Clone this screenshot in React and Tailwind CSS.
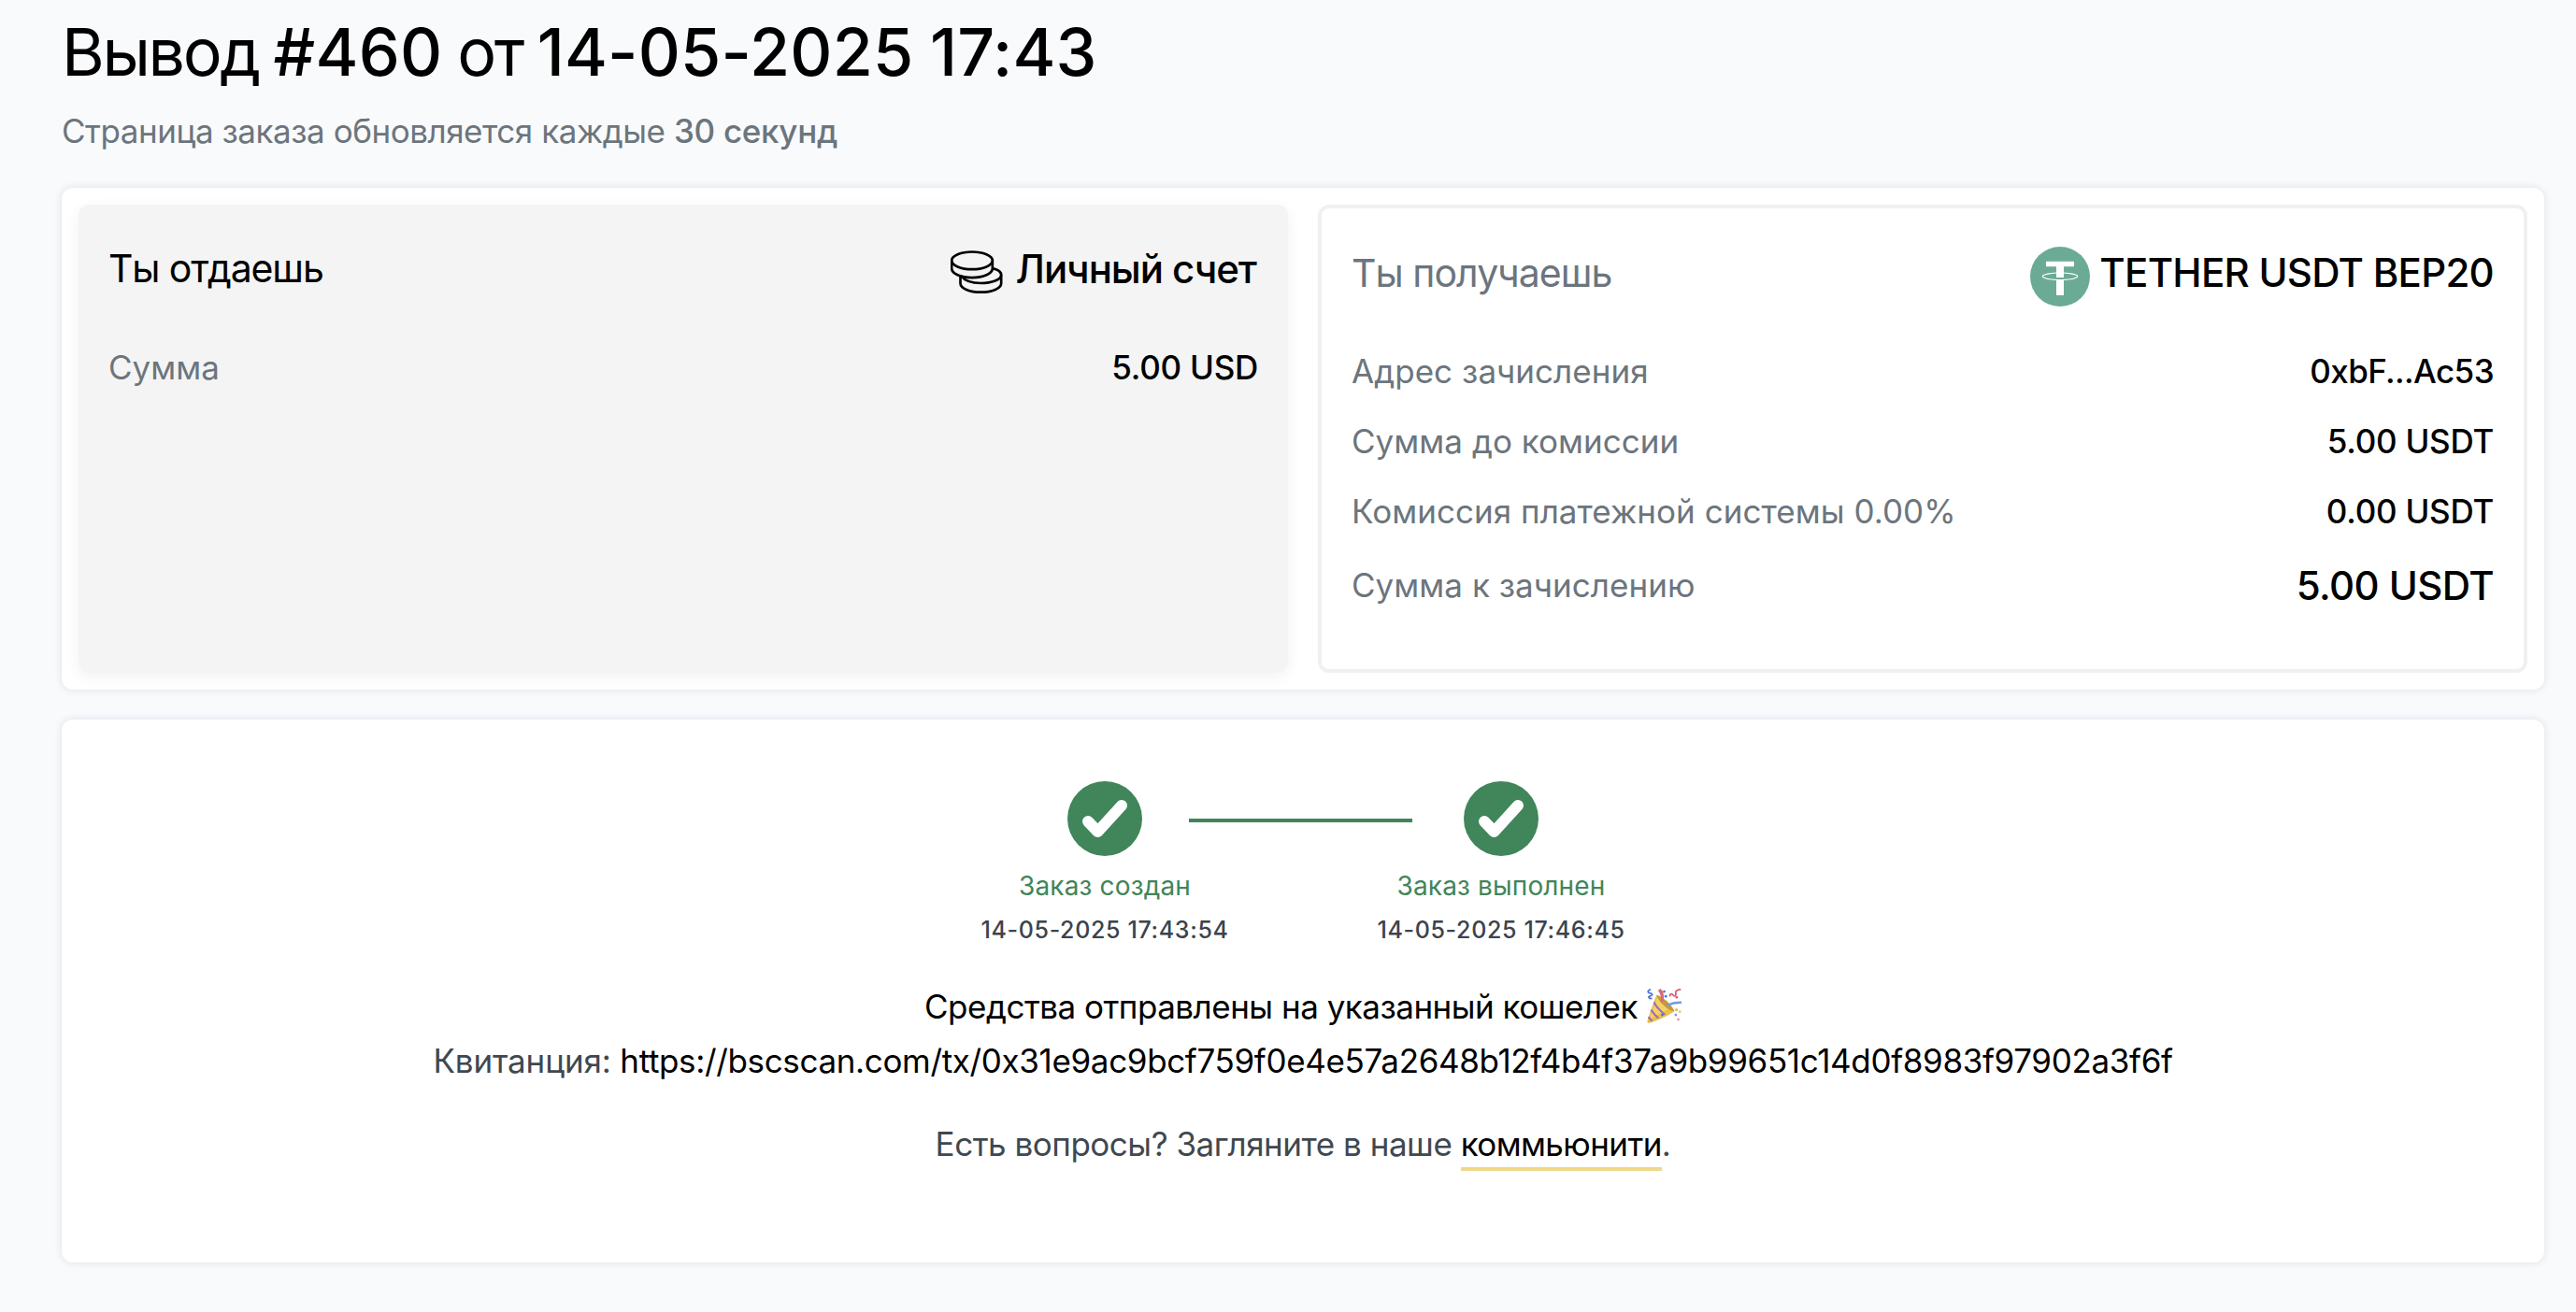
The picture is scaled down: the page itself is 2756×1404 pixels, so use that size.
const DETAILS = [
  { label: 'Адрес зачисления', value: '0xbF...Ac53', tight: true },
  { label: 'Сумма до комиссии', value: '5.00 USDT' },
  { label: 'Комиссия платежной системы 0.00%', value: '0.00 USDT' },
  { label: 'Сумма к зачислению', value: '5.00 USDT', total: true },
];

const TX_URL =
  'https://bscscan.com/tx/0x31e9ac9bcf759f0e4e57a2648b12f4b4f37a9b99651c14d0f8983f97902a3f6f';

function CoinsIcon() {
  return (
    <svg
      className="w-[56px] h-[46px] mt-[7px]"
      viewBox="36 38 168 138"
      fill="none"
      stroke="#000"
      strokeWidth="8"
    >
      <ellipse cx="105" cy="70.5" rx="65.5" ry="28" />
      <path d="M39.5 70v26c0 16 29 29.500 65.500 29.500s65.500-13.500 65.500-29.500V70" />
      <path d="M67.500 117v27c0 15.500 29 28 65.500 28s65.500-12.500 65.500-28v-27c0-9-9-17-25-21" />
      <path d="M70 120c10 14 34 23 63 23 36 0 65.500-11 65.500-26" />
    </svg>
  );
}

function TetherIcon() {
  return (
    <svg className="w-[64px] h-[64px] mt-[10px]" viewBox="24 24 192 192">
      <circle cx="120" cy="120" r="96" fill="#6bab95" />
      <path d="M75 71h90v17h-33v35h-24V88H75zM108 129h24v51h-24z" fill="#fff" />
      <ellipse cx="120" cy="119.500" rx="56" ry="11.500" fill="none" stroke="#fff" strokeWidth="3.500" />
    </svg>
  );
}

function CheckIcon() {
  return (
    <svg className="w-[80px] h-[80px] shrink-0" viewBox="0 0 80 80">
      <circle cx="40" cy="40" r="40" fill="#41855a" />
      <path
        d="M22 43l10.500 11L58 26"
        fill="none"
        stroke="#fff"
        strokeWidth="12"
        strokeLinecap="round"
        strokeLinejoin="round"
      />
    </svg>
  );
}

function PartyIcon() {
  return (
    <svg className="inline-block w-[37px] h-[37px] ml-[10px] align-[-5px]" viewBox="0 0 108 108" fill="none">
      <path d="M30 20C20 45 8 78 1 102c0 4 3 6 7 5 26-7 54-20 78-36C76 50 54 28 30 20z" fill="#e9c04d" />
      <path d="M34 24C26 46 14 74 5 98c20-14 44-24 62-34-6-14-18-30-33-40z" fill="#f6d873" opacity=".7" />
      <path d="M22 42c6 14 18 26 34 39M13 66c6 10 13 18 23 26M5 88c3 5 6 9 11 13" stroke="#9a68c0" strokeWidth="6" />
      <path d="M30 20c20 6 47 30 56 51-20-2-50-30-56-51z" fill="#c9973a" />
      <path d="M46 42c2-12 0-27-9-38M48 38C52 22 48 8 40 2" stroke="#d9687a" strokeWidth="6" />
      <path d="M62 52c14-6 28-10 46-9" stroke="#6d9be0" strokeWidth="7" />
      <path d="M12 2c-10 4-12 10-2 12s8 7 0 9-5 8 6 8" stroke="#4a74d8" strokeWidth="5" />
      <path d="M72 24c-2-8 6-10 10-4s10 2 8-6 6-10 16-12" stroke="#dc5470" strokeWidth="5" />
      <circle cx="54" cy="9" r="4" fill="#4a74d8" />
      <circle cx="59" cy="24" r="4" fill="#4a74d8" />
      <circle cx="93" cy="27" r="4" fill="#dc5470" />
      <circle cx="92" cy="66" r="5" fill="#e9c04d" />
      <circle cx="103" cy="72" r="4" fill="#e5c777" />
      <circle cx="90" cy="82" r="4" fill="#8294d8" />
      <circle cx="98" cy="96" r="4" fill="#e39aa6" />
      <circle cx="48" cy="82" r="4" fill="#4a74d8" />
    </svg>
  );
}

function Step({ title, date }) {
  return (
    <div className="w-[180px] flex flex-col items-center whitespace-nowrap">
      <CheckIcon />
      <p className="mt-[11px] text-[28px] leading-[42px] tracking-[0.15px] text-[#41855a]">{title}</p>
      <p className="mt-[7px] text-[25px] leading-[38px] tracking-[0.65px] font-medium text-[#3c434c]">{date}</p>
    </div>
  );
}

function DetailRow({ label, value, tight, total }) {
  return (
    <div className={`flex items-center justify-between ${total ? 'h-[60px]' : 'h-[52px]'}`}>
      <span className="text-[35px] tracking-[0.04px] text-[#6c757d]">{label}</span>
      <span
        className={`font-medium ${
          total ? 'text-[42px] tracking-[-0.6px]' : tight ? 'text-[35px] tracking-[-0.6px]' : 'text-[35px] tracking-[-0.25px]'
        }`}
      >
        {value}
      </span>
    </div>
  );
}

export default function App() {
  return (
    <div className="w-full h-[1404px] overflow-hidden bg-[#f9fafc] pl-[66px] pr-[34px] pt-[13px] text-black font-[Inter,sans-serif]">
      {/* Header */}
      <h1 className="text-[70px] leading-[85px] tracking-[-2.4px] [word-spacing:-1.500px] whitespace-pre">
        Вывод <span className="font-medium tracking-[0.2px]">#460</span> от{' '}
        <span className="font-medium tracking-[0.2px]">14-05-2025 17:43</span>
      </h1>
      <p className="mt-[15px] text-[35px] leading-[54px] tracking-[-0.46px] text-[#6c757d]">
        Страница заказа обновляется каждые <span className="font-medium tracking-[-0.3px]">30 секунд</span>
      </p>

      {/* Exchange details */}
      <div className="mt-[34px] h-[537px] p-[18px] grid grid-cols-2 gap-[32px] rounded-xl bg-white shadow-[0_0_8px_rgba(40,30,80,0.12)]">
        <div className="rounded-xl bg-[#f4f4f4] px-[32px] pt-[36px] shadow-[0_4px_16px_rgba(40,30,90,0.06)]">
          <div className="flex items-center justify-between h-[64px]">
            <span className="mt-[2px] text-[41px] tracking-[-1.15px]">Ты отдаешь</span>
            <div className="flex items-center gap-[14px] pr-[2px]">
              <CoinsIcon />
              <span className="text-[42px] tracking-[-1.05px] font-medium">Личный счет</span>
            </div>
          </div>
          <div className="mt-[48px]">
            <DetailRow label="Сумма" value="5.00 USD" />
          </div>
        </div>

        <div className="rounded-xl border-4 border-[#f1f0f1] px-[32px] pt-[32px]">
          <div className="flex items-center justify-between h-[72px]">
            <span className="mt-[3px] text-[41px] tracking-[-0.95px] text-[#6c757d]">Ты получаешь</span>
            <div className="flex items-center gap-[10px]">
              <TetherIcon />
              <span className="text-[42px] tracking-[-0.72px] font-medium">TETHER USDT BEP20</span>
            </div>
          </div>
          <div className="mt-[44px] flex flex-col gap-[23px]">
            {DETAILS.map((row) => (
              <DetailRow key={row.label} {...row} />
            ))}
          </div>
        </div>
      </div>

      {/* Status */}
      <div className="mt-[32px] h-[581px] pt-[66px] rounded-xl bg-white text-center shadow-[0_0_8px_rgba(40,30,80,0.12)]">
        <div className="flex justify-center">
          <Step title="Заказ создан" date="14-05-2025 17:43:54" />
          <div className="w-[239px] h-1 mt-[40px] mr-[5px] bg-[#41855a]" />
          <Step title="Заказ выполнен" date="14-05-2025 17:46:45" />
        </div>

        <div className="mt-[34px] text-[35px] leading-[58px] text-[#3f4850]">
          <p className="h-[58px] tracking-[-0.5px] text-black">
            Средства отправлены на указанный кошелек
            <PartyIcon />
          </p>
          <p className="tracking-[-0.15px]">
            Квитанция:{' '}
            <a href={TX_URL} className="tracking-[-0.35px] text-black">
              {TX_URL}
            </a>
          </p>
          <p className="mt-[31px] tracking-[-0.48px]">
            Есть вопросы? Загляните в наше{' '}
            <a href="#community" className="pb-[4px] border-b-4 border-[#eed98a] tracking-[-0.6px] text-black">
              коммьюнити
            </a>
            .
          </p>
        </div>
      </div>
    </div>
  );
}
